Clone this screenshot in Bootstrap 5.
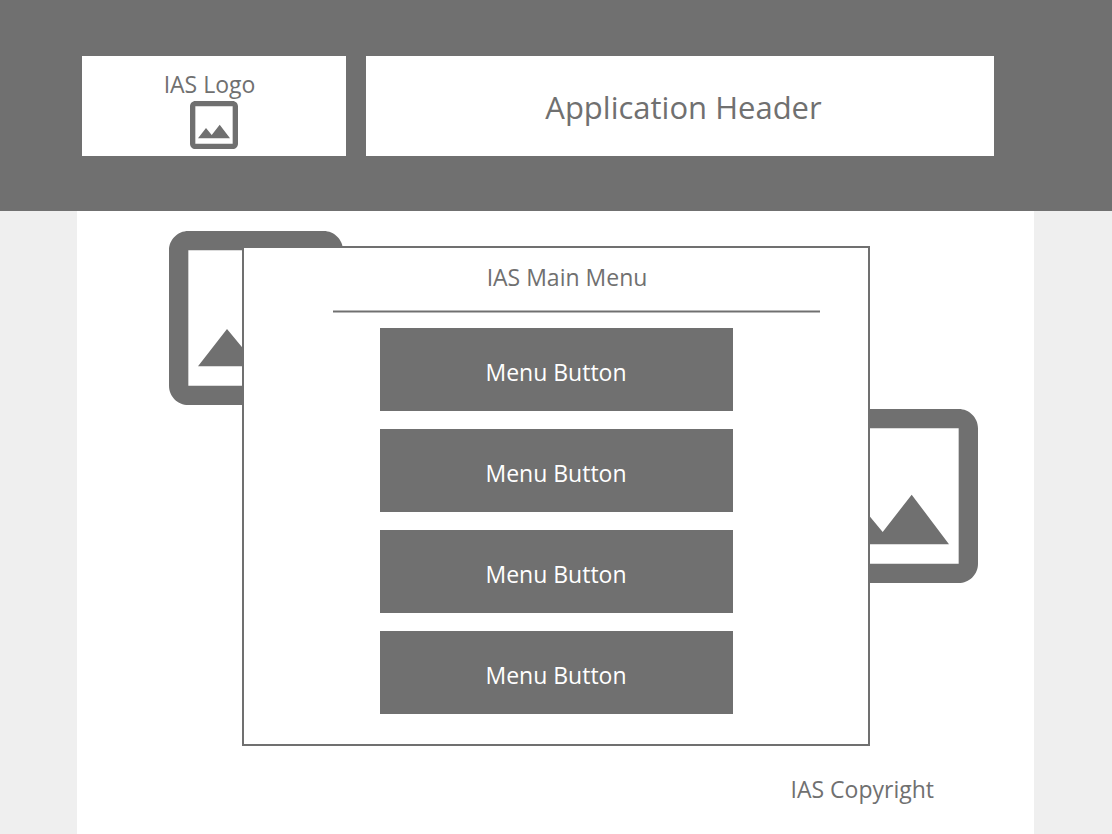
<!DOCTYPE html>
<html lang="en">
<head>
<meta charset="utf-8">
<meta name="viewport" content="width=device-width, initial-scale=1">
<title>IAS Main Menu</title>
<link rel="stylesheet" href="https://cdn.jsdelivr.net/npm/bootstrap@5.3.0/dist/css/bootstrap.min.css">
<style>
  :root { --ink: #707070; }
  body { background: #efefef; color: var(--ink); font-family: "Open Sans", "Noto Sans", sans-serif; font-size: 23px; line-height: 32px; }
  .site-header { background: var(--ink); padding: 56px 118px 55px 82px; gap: 20px; }
  .logo-box { flex: 0 0 264px; height: 100px; padding: 12px 0 0; }
  .logo-box span { padding-right: 9px; }
  .logo-box svg { width: 48px; height: 48px; margin-top: 1px; }
  .app-title { font-size: 31px; line-height: 40px; padding: 2px 0 0 7px; }
  .page-body { margin: 0 78px 0 77px; padding-top: 35px; }
  .menu-wrap { width: 628px; max-width: 100%; }
  .menu-panel { border: 2px solid var(--ink); padding: 13px 0 30px 1px; }
  .menu-title { font-size: 23px; line-height: 32px; padding-left: 22px; }
  .divider { height: 3px; margin: 17px 48px 15px 88px; background: var(--ink); border: solid #b8b8b8; border-width: 1px 0; opacity: 1; }
  .menu-list { width: 353px; max-width: 100%; gap: 18px; }
  .menu-btn { --bs-btn-color: #fff; --bs-btn-bg: var(--ink); --bs-btn-hover-color: #fff; --bs-btn-hover-bg: #5c5c5c; --bs-btn-active-color: #fff; --bs-btn-active-bg: #505050; height: 83px; padding: 4px 0 0; font-size: 23px; line-height: 32px; }
  .backdrop-pic { width: 174px; height: 174px; }
  .pic-left { left: -73px; top: -15px; }
  .pic-right { right: -108px; top: 163px; }
  .site-footer { padding: 27px 100px 28px 0; }
</style>
</head>
<body class="d-flex flex-column min-vh-100">
<svg class="d-none" aria-hidden="true">
  <symbol id="picture" viewBox="3 3 18 18">
    <path fill="currentColor" d="M19 5v14H5V5h14m0-2H5c-1.1 0-2 .9-2 2v14c0 1.1.9 2 2 2h14c1.1 0 2-.9 2-2V5c0-1.1-.9-2-2-2zm-4.86 8.86l-3 3.87L9 13.14 6 17h12l-3.86-5.14z"/>
  </symbol>
</svg>

<header class="site-header d-flex">
  <div class="logo-box bg-white d-flex flex-column align-items-center">
    <span>IAS Logo</span>
    <svg aria-hidden="true"><use href="#picture"/></svg>
  </div>
  <div class="bg-white flex-grow-1 d-flex align-items-center justify-content-center">
    <h1 class="app-title fw-normal m-0">Application Header</h1>
  </div>
</header>

<div class="page-body bg-white flex-grow-1">
  <main class="menu-wrap position-relative mx-auto">
    <svg class="backdrop-pic pic-left position-absolute" aria-hidden="true"><use href="#picture"/></svg>
    <svg class="backdrop-pic pic-right position-absolute" aria-hidden="true"><use href="#picture"/></svg>
    <section class="menu-panel bg-white position-relative">
      <h2 class="menu-title fw-normal text-center mb-0">IAS Main Menu</h2>
      <hr class="divider">
      <nav class="menu-list d-flex flex-column mx-auto" aria-label="Main menu">
        <button type="button" class="btn menu-btn border-0 rounded-0">Menu Button</button>
        <button type="button" class="btn menu-btn border-0 rounded-0">Menu Button</button>
        <button type="button" class="btn menu-btn border-0 rounded-0">Menu Button</button>
        <button type="button" class="btn menu-btn border-0 rounded-0">Menu Button</button>
      </nav>
    </section>
  </main>
  <footer class="site-footer text-end">IAS Copyright</footer>
</div>
<script src="https://cdn.jsdelivr.net/npm/bootstrap@5.3.0/dist/js/bootstrap.bundle.min.js"></script>
</body>
</html>
